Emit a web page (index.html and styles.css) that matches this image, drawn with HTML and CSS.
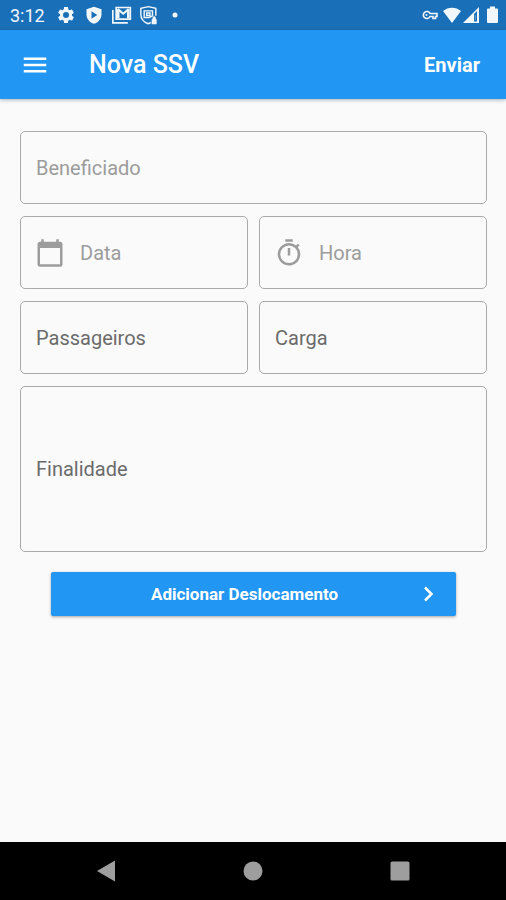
FILE: index.html
```
<!DOCTYPE html>
<html lang="pt-BR">
    <head>
        <meta charset="utf-8">
        <meta name="viewport" content="width=device-width, initial-scale=1">
        <title>Nova SSV</title>
        <link rel="stylesheet" href="styles.css">
    </head>
    <body>
        <div class="status-bar">
            <span class="time">3:12</span>
            <svg width="20" height="20" viewBox="0 0 24 24" fill="currentColor"><path d="M19.14 12.94c.04-.3.06-.61.06-.94s-.02-.64-.07-.94l2.03-1.58a.49.49 0 0 0 .12-.61l-1.92-3.32a.49.49 0 0 0-.59-.22l-2.39.96a7 7 0 0 0-1.62-.94l-.36-2.54A.48.48 0 0 0 13.92 2.400h-3.840c-.24 0-.43.17-.47.41l-.36 2.540c-.59.24-1.130.57-1.620.94l-2.390-.96a.48.48 0 0 0-.59.22L2.740 8.870a.47.47 0 0 0 .12.61l2.030 1.580c-.05.3-.09.63-.09.94s.02.64.07.94l-2.030 1.580a.49.49 0 0 0-.12.61l1.920 3.320c.12.22.37.29.59.22l2.390-.96c.5.38 1.030.7 1.620.94l.36 2.540c.05.24.24.41.48.41h3.840c.24 0 .44-.17.47-.41l.36-2.540a7 7 0 0 0 1.620-.94l2.390.96c.22.08.47 0 .59-.22l1.920-3.320a.47.47 0 0 0-.12-.61zM12 15.600A3.600 3.600 0 1 1 12 8.400a3.600 3.600 0 0 1 0 7.200z"/></svg>
            <svg width="20" height="20" viewBox="0 0 24 24" fill="currentColor"><path fill-rule="evenodd" d="M12 2 3 5v6c0 5.550 3.840 10 9 11.500 5.160-1.500 9-5.950 9-11.500V5zM9 7.500v9l7-4.500z"/></svg>
            <svg width="20" height="20" viewBox="0 0 24 24" fill="none" stroke="currentColor" stroke-width="2"><path d="M1 6v15.500h18"/><path d="M5 3h17v14H5z"/><path d="M7 5l6.500 5.500L20 5" stroke-width="2.500"/><path d="M7.500 5v11M19.500 5v11" stroke-width="3"/></svg>
            <svg width="20" height="20" viewBox="0 0 24 24" fill="none" stroke="currentColor" stroke-width="1.700"><path d="M19 13V4l-9-2-9 2v7c0 5.500 3.500 9.500 9 11.500l3-1.500"/><path d="M5 7h10v6l-4 2H5z"/><path d="M8 9.500h4v3H8z"/><path fill="currentColor" stroke="none" d="M14 17h1v-1.500a2 2 0 0 1 4 0V17h1v6h-6z"/></svg>
            <svg width="14" height="20" viewBox="0 0 14 20" fill="currentColor"><circle cx="7" cy="10" r="2.500"/></svg>
            <div class="status-right">
                <svg width="20" height="20" viewBox="0 0 20 20" fill="none" stroke="currentColor" stroke-width="2"><path d="M9 8.500h7v3h-1.500v2h-2.500v-2H9A3.500 3.500 0 1 1 9 8.500z" stroke-width="1.600"/><circle cx="5.500" cy="10" r="1" fill="currentColor" stroke="none"/></svg>
                <svg width="18" height="20" viewBox="0 0 18 20" fill="currentColor"><path d="M9 18 0 6c5-4.500 13-4.500 18 0z"/></svg>
                <svg width="16" height="20" viewBox="0 0 16 20" fill="currentColor"><path fill-rule="evenodd" d="M0 18 16 2v16zM11 9v7.500h3V6z"/><path d="M11.800 10h1.200v5h-1.200z" opacity=".3"/></svg>
                <svg width="18" height="20" viewBox="0 0 18 20" fill="currentColor"><path d="M9 1.500h5v2h2a1 1 0 0 1 1 1V17a1 1 0 0 1-1 1H7a1 1 0 0 1-1-1V4.500a1 1 0 0 1 1-1h2z"/></svg>
            </div>
        </div>
        <header class="app-bar">
            <button class="menu" type="button" aria-label="Menu">
                <svg width="30" height="30" viewBox="0 0 24 24" fill="currentColor"><path d="M3 18h18v-2H3zm0-5h18v-2H3zm0-7v2h18V6z"/></svg>
            </button>
            <h1>Nova SSV</h1>
            <button class="send" type="submit" form="ssv">Enviar</button>
        </header>
        <form id="ssv">
            <div class="field wide muted">
                <input type="text" aria-label="Beneficiado" placeholder="Beneficiado">
            </div>
            <div class="field muted">
                <svg width="30" height="30" viewBox="0 0 24 24" fill="currentColor"><path d="M20 3h-1V1h-2v2H7V1H5v2H4a2 2 0 0 0-2 2v16c0 1.100.9 2 2 2h16a2 2 0 0 0 2-2V5a2 2 0 0 0-2-2zm0 18H4V8h16z"/></svg>
                <input type="text" aria-label="Data" placeholder="Data">
            </div>
            <div class="field muted">
                <svg width="30" height="30" viewBox="0 0 24 24" fill="currentColor"><path d="M15 1H9v2h6zm-4 13h2V8h-2zm8.030-6.610 1.420-1.420c-.43-.51-.9-.99-1.410-1.410l-1.420 1.420A9 9 0 1 0 19.030 7.390zM12 20a7 7 0 1 1 0-14 7 7 0 0 1 0 14z"/></svg>
                <input type="text" aria-label="Hora" placeholder="Hora">
            </div>
            <div class="field">
                <input type="text" aria-label="Passageiros" placeholder="Passageiros">
            </div>
            <div class="field">
                <input type="text" aria-label="Carga" placeholder="Carga">
            </div>
            <div class="field wide tall">
                <textarea rows="5" aria-label="Finalidade" placeholder="Finalidade"></textarea>
            </div>
            <button class="add" type="button">
                <span>Adicionar Deslocamento</span>
                <svg width="24" height="24" viewBox="0 0 24 24" fill="none" stroke="currentColor" stroke-width="2.500"><path d="M9 5.500 15.500 12 9 18.500"/></svg>
            </button>
        </form>
        <nav class="nav-bar">
            <button type="button" aria-label="Voltar">
                <svg width="22" height="22" viewBox="0 0 22 22" fill="currentColor"><path d="M2 11 20 0.500v21z"/></svg>
            </button>
            <button type="button" aria-label="Início">
                <svg width="22" height="22" viewBox="0 0 22 22" fill="currentColor"><circle cx="11" cy="11" r="9.500"/></svg>
            </button>
            <button type="button" aria-label="Recentes">
                <svg width="22" height="22" viewBox="0 0 22 22" fill="currentColor"><rect x="1.500" y="1.500" width="19" height="19" rx="1.500"/></svg>
            </button>
        </nav>
    </body>
</html>
```
FILE: styles.css
```
* {
    box-sizing: border-box;
}
body {
    display: flex;
    flex-direction: column;
    min-height: 100vh;
    margin: 0;
    background: #fafafa;
    font-family: Roboto, sans-serif;
}
button {
    padding: 0;
    border: 0;
    background: none;
    color: inherit;
    font-family: inherit;
    cursor: pointer;
}
svg {
    display: block;
    flex-shrink: 0;
}
.status-bar {
    display: flex;
    align-items: center;
    gap: 8px;
    height: 30px;
    padding: 0 7px 0 10px;
    background: #1a70b8;
    color: #f2f7fc;
}
.time {
    margin-right: 3px;
    font-size: 18px;
}
.status-right {
    display: flex;
    gap: 2px;
    margin-left: auto;
}
.app-bar {
    display: flex;
    align-items: center;
    height: 69px;
    padding: 0 26px 0 20px;
    background: #2196f3;
    box-shadow: 0 1px 4px rgba(0, 0, 0, 0.3);
    color: white;
}
h1 {
    margin: 0 auto 0 39px;
    font-size: 25px;
    font-weight: 500;
    line-height: 32px;
}
.send {
    font-size: 20px;
    font-weight: 700;
}
form {
    display: grid;
    grid-template-columns: 1fr 1fr;
    gap: 12px 11px;
    padding: 32px 19px 32px 20px;
}
.field {
    display: flex;
    align-items: center;
    gap: 15px;
    min-width: 0;
    height: 73px;
    padding: 0 15px;
    border: 1px solid #aaa;
    border-radius: 5px;
    color: #6b6b6b;
}
.muted {
    color: #9c9c9c;
}
.field svg {
    margin-left: -1px;
}
.wide {
    grid-column: 1 / -1;
}
.tall {
    height: 166px;
}
input, textarea {
    flex: 1;
    min-width: 0;
    padding: 0;
    border: 0;
    outline: 0;
    background: none;
    color: #212121;
    font-family: inherit;
    font-size: 20px;
    line-height: 24px;
}
textarea {
    height: 100%;
    padding-top: 70px;
    resize: none;
}
::placeholder {
    color: #6b6b6b;
    opacity: 1;
}
.muted ::placeholder {
    color: #9c9c9c;
}
.add {
    display: flex;
    align-items: center;
    grid-column: 1 / -1;
    height: 44px;
    margin: 8px 31px 0;
    padding: 0 16px 0 22px;
    border-radius: 2px;
    background: #2196f3;
    box-shadow: 0 1px 3px rgba(0, 0, 0, 0.35);
    color: white;
    font-size: 17px;
    font-weight: 700;
}
.add span {
    flex: 1;
}
.nav-bar {
    display: flex;
    justify-content: space-around;
    align-items: center;
    height: 58px;
    margin-top: auto;
    padding: 0 33px;
    background: black;
    color: #9e9e9e;
}
```
